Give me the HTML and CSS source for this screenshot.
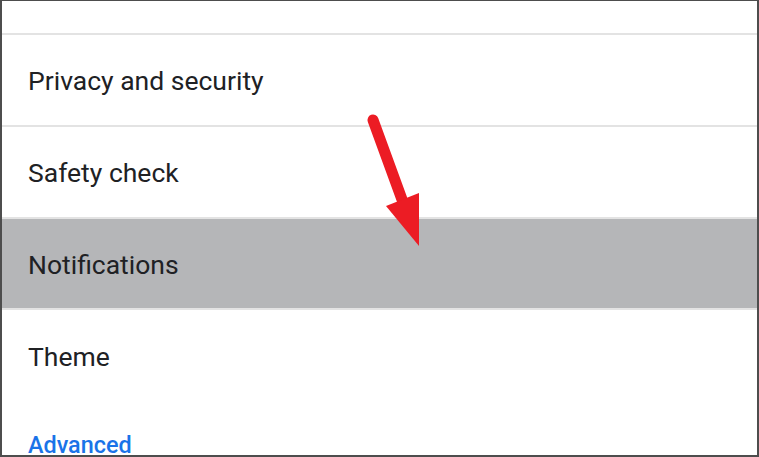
FILE: index.html
```html
<!DOCTYPE html>
<html>
<head>
<meta charset="utf-8">
<link rel="stylesheet" href="styles.css">
</head>
<body>
<div class="frame">
  <div class="top-spacer"></div>
  <div class="row">Privacy and security</div>
  <div class="row">Safety check</div>
  <div class="row row-active">Notifications</div>
  <div class="row row-last">Theme</div>
  <div class="section">Advanced</div>
  <svg class="arrow" width="759" height="457" viewBox="0 0 759 457">
    <line x1="373" y1="120" x2="404" y2="205" stroke="#ec1c24" stroke-width="11" stroke-linecap="round"/>
    <polygon points="386,206 419,193 419,246" fill="#ec1c24"/>
  </svg>
</div>
</body>
</html>
```
FILE: styles.css
```css
html, body {
  margin: 0;
  padding: 0;
  background: #ffffff;
}
.frame {
  position: relative;
  width: 759px;
  height: 457px;
  box-sizing: border-box;
  border-style: solid;
  border-color: #4d4d4d;
  border-width: 1px 2px 2px 2px;
  overflow: hidden;
  font-family: Roboto, "Noto Sans", sans-serif;
  display: flex;
  flex-direction: column;
}
.top-spacer {
  height: 32px;
  flex: none;
  border-bottom: 2px solid #e3e3e3;
}
.row {
  flex: none;
  height: 92px;
  box-sizing: border-box;
  border-bottom: 2px solid #e3e3e3;
  display: flex;
  align-items: center;
  padding-left: 26px;
  padding-top: 1px;
  font-size: 26.5px;
  color: #202124;
}
.row-active {
  background: #b5b6b8;
  height: 91px;
}
.row-last {
  border-bottom: none;
}
.section {
  flex: none;
  padding-left: 26px;
  padding-top: 29px;
  font-size: 23.4px;
  font-weight: 500;
  color: #1a73e8;
}
.arrow {
  position: absolute;
  left: -2px;
  top: -1px;
  pointer-events: none;
}
```
